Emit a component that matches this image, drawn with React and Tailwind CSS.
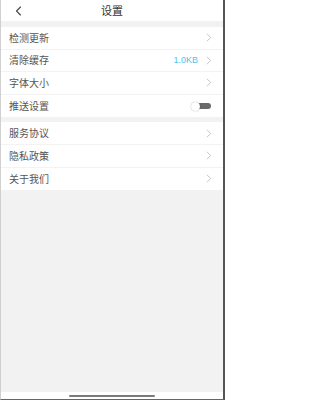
import React from "react";

const Chevron = () => (
  <svg width="6" height="9" viewBox="0 0 6 9" fill="none">
    <path d="M1.2 1 L4.6 4.5 L1.2 8" stroke="#c4c4c4" strokeWidth="1" strokeLinecap="round" strokeLinejoin="round" />
  </svg>
);

const Row = ({ label, right, last, chevron = true }) => (
  <div className={"h-[22.6px] flex items-center pl-[8px] pr-[11px] bg-white " + (last ? "" : "border-b border-[#f3f3f3]")}>
    <span className="text-[10px] leading-none text-[#555]">{label}</span>
    <div className="ml-auto flex items-center gap-[8px]">
      {right}
      {chevron && <Chevron />}
    </div>
  </div>
);

const Toggle = () => (
  <div className="relative w-[20px] h-[9px] mr-[1px] flex items-center">
    <div className="absolute right-0 w-[15px] h-[6px] rounded-full bg-[#6b6b6b]" />
    <div className="absolute left-0 w-[9px] h-[9px] rounded-full bg-white shadow-[0_0_1.5px_rgba(0,0,0,0.35)]" />
  </div>
);

export default function App() {
  return (
    <div
      className="w-[225px] h-[400px] flex flex-col bg-[#f2f2f2] border-l border-l-[#d0d0d0] border-r-2 border-r-[#555] border-b border-b-[#666] overflow-hidden"
      style={{ fontFamily: '"Noto Sans CJK SC", "Noto Sans", sans-serif' }}
    >
      <div className="h-[21px] shrink-0 bg-white relative flex items-center justify-center">
        <svg className="absolute left-[14px] top-[6px]" width="7" height="10" viewBox="0 0 7 10" fill="none">
          <path d="M5.5 1 L1.5 5 L5.5 9" stroke="#444" strokeWidth="1.1" strokeLinecap="round" strokeLinejoin="round" />
        </svg>
        <span className="text-[11px] leading-none text-[#333]">设置</span>
      </div>
      <div className="h-[6px] shrink-0" />
      <div className="flex flex-col shrink-0">
        <Row label="检测更新" />
        <Row label="清除缓存" right={<span className="text-[9px] leading-none text-[#4fc3ee]" style={{ fontFamily: '"Liberation Sans", sans-serif' }}>1.0KB</span>} />
        <Row label="字体大小" />
        <Row label="推送设置" chevron={false} right={<Toggle />} last />
      </div>
      <div className="h-[5px] shrink-0" />
      <div className="flex flex-col shrink-0">
        <Row label="服务协议" />
        <Row label="隐私政策" />
        <Row label="关于我们" last />
      </div>
      <div className="flex-1" />
      <div className="h-[7px] shrink-0 bg-white flex justify-center items-center">
        <div className="w-[86px] h-[2px] rounded-full bg-[#7a7a7a]" />
      </div>
    </div>
  );
}
